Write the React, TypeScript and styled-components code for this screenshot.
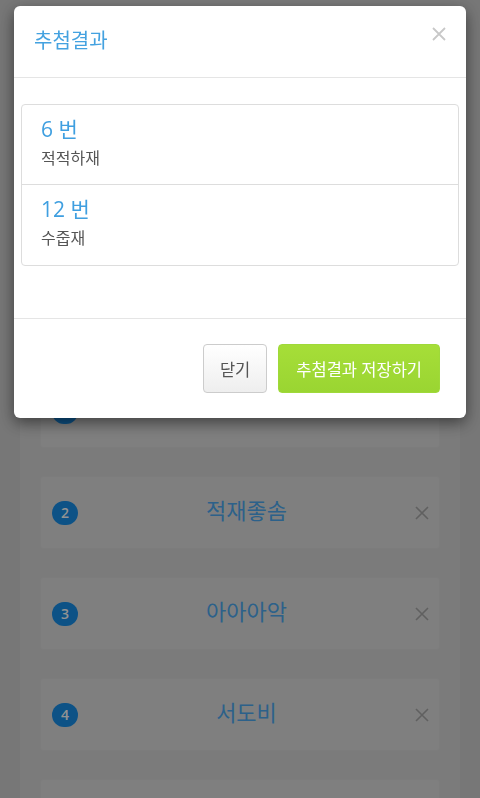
import React from "react";
import styled, { createGlobalStyle } from "styled-components";

const Global = createGlobalStyle`
  html, body { margin: 0; padding: 0; }
  body {
    background: #c6c6c6;
    font-family: "Open Sans", "Noto Sans CJK KR", "Noto Sans", sans-serif;
    overflow: hidden;
  }
`;

const Page = styled.div`
  height: 798px;
  overflow: hidden;
  padding: 0 20px;
`;

const Panel = styled.main`
  background: #cdcdcd;
  min-height: 798px;
  padding: 0 20px;
  display: flex;
  flex-direction: column;
  gap: 28px;
`;

const Toolbar = styled.div`
  height: 347px;
`;

const Card = styled.div`
  height: 71px;
  flex-shrink: 0;
  background: #d4d4d4;
  border: 1px solid #cfcfcf;
  border-radius: 3px;
  display: flex;
  align-items: center;
  padding: 0 10px 0 11px;
`;

const Badge = styled.span`
  width: 26px;
  height: 24px;
  border-radius: 12px;
  background: #1689e0;
  color: #f4f4f4;
  font-size: 14px;
  font-weight: 600;
  display: flex;
  align-items: center;
  justify-content: center;
`;

const Name = styled.span`
  flex: 1;
  text-align: center;
  color: #4aa2e6;
  font-size: 22px;
  line-height: 28px;
  padding-bottom: 6px;
`;

const XIcon = ({ size, color, stroke }: { size: number; color: string; stroke: number }) => (
  <svg width={size} height={size} viewBox="0 0 14 14" style={{ display: "block" }}>
    <path d="M1 1L13 13M13 1L1 13" stroke={color} strokeWidth={stroke} fill="none" />
  </svg>
);

const Remove = styled.span`
  display: flex;
`;

const Backdrop = styled.div`
  position: fixed;
  inset: 0;
  background: rgba(0, 0, 0, 0.4);
`;

const Modal = styled.div`
  position: fixed;
  top: 6px;
  left: 14px;
  right: 14px;
  background: #fff;
  border-radius: 6px;
  box-shadow: 0 5px 15px rgba(0, 0, 0, 0.5);
`;

const Header = styled.div`
  display: flex;
  justify-content: space-between;
  align-items: flex-start;
  padding: 20px 20px 21px 20px;
  border-bottom: 1px solid #e5e5e5;
`;

const Title = styled.h4`
  margin: 0;
  font-size: 20px;
  line-height: 30px;
  font-weight: 400;
  color: #44a2e0;
`;

const CloseX = styled.span`
  display: flex;
  margin-top: 1px;
`;

const Body = styled.div`
  padding: 26px 7px 52px;
`;

const ListGroup = styled.div`
  border: 1px solid #dddddd;
  border-radius: 4px;
`;

const Item = styled.div<{ $last?: boolean }>`
  padding: 9px 19px 0;
  height: 80px;
  box-sizing: border-box;
  border-bottom: ${(p) => (p.$last ? "none" : "1px solid #dddddd")};
`;

const Num = styled.div`
  font-size: 21px;
  line-height: 30px;
  color: #3f9fe0;
`;

const Person = styled.div`
  margin-top: 2px;
  font-size: 16px;
  line-height: 24px;
  color: #555;
`;

const Footer = styled.div`
  display: flex;
  justify-content: flex-end;
  gap: 11px;
  padding: 25px 26px 25px;
  border-top: 1px solid #e5e5e5;
`;

const Button = styled.button<{ $primary?: boolean }>`
  height: 49px;
  padding: 0 ${(p) => (p.$primary ? 17 : 16)}px;
  border-radius: 4px;
  font-size: 16.5px;
  font-family: "Open Sans", "Noto Sans CJK KR", sans-serif;
  border: 1px solid ${(p) => (p.$primary ? "#9fd93a" : "#cccccc")};
  color: ${(p) => (p.$primary ? "#ffffff" : "#555555")};
  background: ${(p) =>
    p.$primary
      ? "linear-gradient(#a6de38, #9ad532)"
      : "linear-gradient(#ffffff, #eeeeee)"};
`;

const entries = ["", "적재좋솜", "아아아악", "서도비", ""];
const results = [
  { n: 6, name: "적적하재" },
  { n: 12, name: "수줍재" },
];

export default function App() {
  return (
    <>
      <Global />
      <Page>
        <Panel>
          <Toolbar />
          {entries.map((e, i) => (
            <Card key={i}>
              <Badge>{i + 1}</Badge>
              <Name>{e}</Name>
              <Remove>
                <XIcon size={14} color="#a0a0a0" stroke={1.6} />
              </Remove>
            </Card>
          ))}
        </Panel>
      </Page>
      <Backdrop />
      <Modal>
        <Header>
          <Title>추첨결과</Title>
          <CloseX>
            <XIcon size={14} color="#c8c8c8" stroke={1.8} />
          </CloseX>
        </Header>
        <Body>
          <ListGroup>
            {results.map((r, i) => (
              <Item key={r.n} $last={i === results.length - 1}>
                <Num>{r.n} 번</Num>
                <Person>{r.name}</Person>
              </Item>
            ))}
          </ListGroup>
        </Body>
        <Footer>
          <Button>닫기</Button>
          <Button $primary>추첨결과 저장하기</Button>
        </Footer>
      </Modal>
    </>
  );
}
